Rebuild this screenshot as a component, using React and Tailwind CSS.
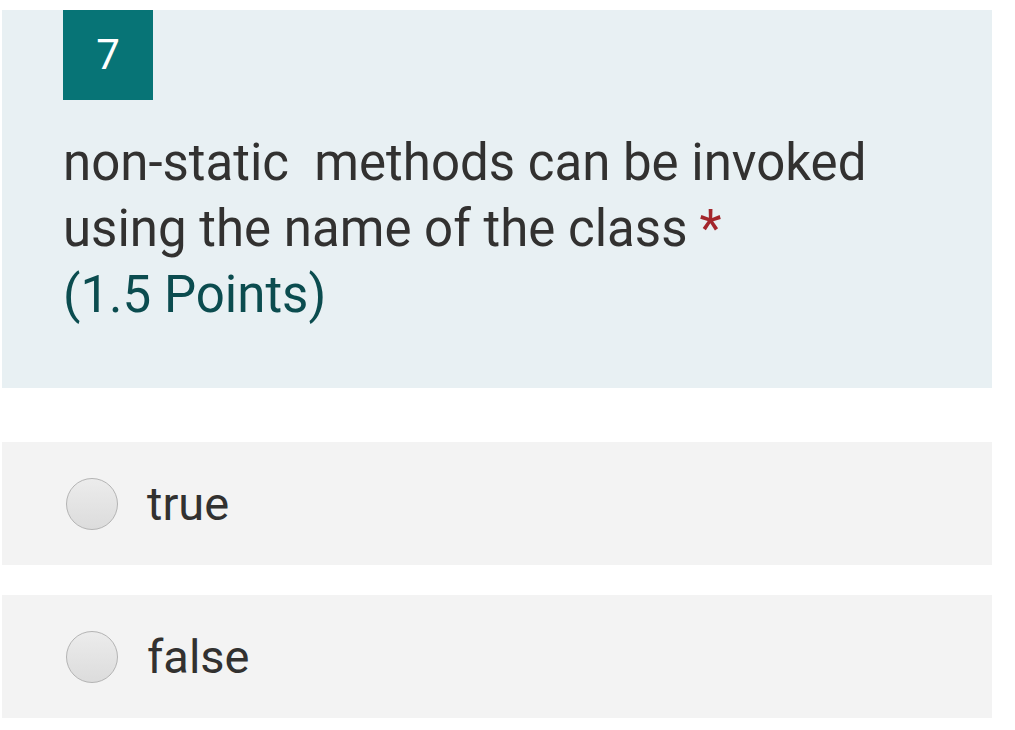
export default function App() {
  return (
    <div className="w-[1015px] h-[730px] bg-white overflow-hidden" style={{ fontFamily: "Roboto, 'Liberation Sans', sans-serif" }}>
      <div className="pt-[10px] pl-[2px] w-[992px]">
        <div className="bg-[#e8f0f3] pl-[61px] pr-[40px] pb-[60px]">
          <div className="w-[90px] h-[90px] bg-[#077476] text-white flex items-center justify-center text-[42px] leading-none">7</div>
          <div className="mt-[30px] text-[51px] leading-[66px] text-[#323130]">
            <div>non-static&nbsp; methods can be invoked</div>
            <div>
              using the name of the class
              <span className="text-[#a4262c] ml-[12px]">*</span>
            </div>
            <div className="text-[#0b4c4f]">(1.5 Points)</div>
          </div>
        </div>
        <div className="mt-[54px] flex flex-col gap-[30px]">
          {["true", "false"].map((t) => (
            <div key={t} className="h-[123px] bg-[#f3f3f3] flex items-center pl-[64px]">
              <div className="w-[52px] h-[52px] rounded-full border border-[#b4b4b4] bg-gradient-to-b from-[#ececec] to-[#dcdcdc]" />
              <span className="ml-[29px] text-[47px] leading-none text-[#323130]">{t}</span>
            </div>
          ))}
        </div>
      </div>
    </div>
  );
}
